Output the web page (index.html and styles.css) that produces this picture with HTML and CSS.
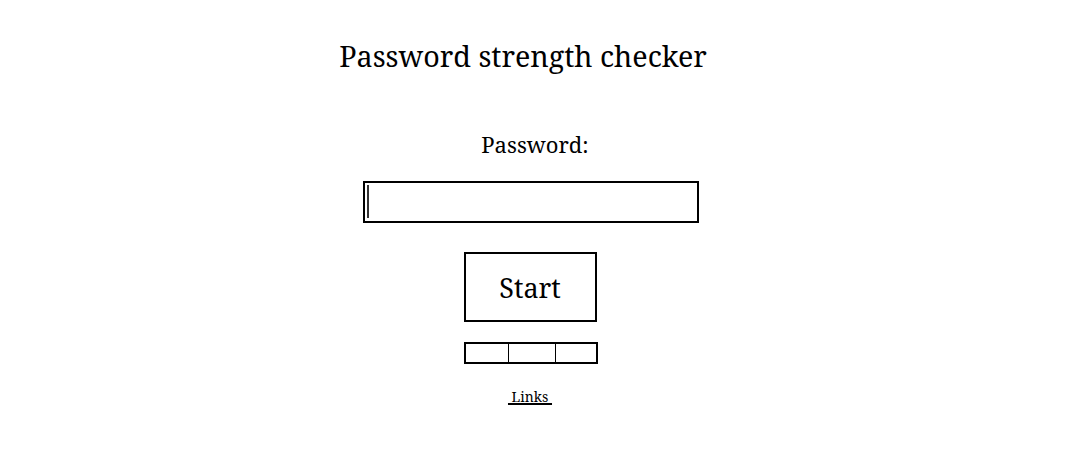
FILE: index.html
```html
<!DOCTYPE html>
<html lang="en">
<head>
    <meta charset="UTF-8">
    <meta name="viewport" content="width=device-width, initial-scale=1.0">
    <title>Password strength checker</title>
    <link rel="stylesheet" href="styles.css">
</head>
<body>
    <div class="page">
        <h1 class="title">Password strength checker</h1>

        <label class="label" for="password">Password:</label>

        <div class="field">
            <input class="input" type="password" id="password">
            <span class="caret"></span>
        </div>

        <button class="start-btn" type="button">Start</button>

        <div class="meter">
            <div class="cell"></div>
            <div class="cell"></div>
            <div class="cell"></div>
        </div>

        <a href="#" class="links">&nbsp;Links&nbsp;</a>
    </div>
</body>
</html>
```

FILE: styles.css
```css
* {
    margin: 0;
    padding: 0;
    box-sizing: border-box;
}

body {
    background: white;
    font-family: "Noto Serif", "DejaVu Serif", serif;
    color: #000;
}

.page {
    width: 1060px;
    display: flex;
    flex-direction: column;
    align-items: center;
}

.title {
    font-size: 28.7px;
    font-weight: normal;
    margin-top: 36px;
    margin-right: 14px;
}

.label {
    font-size: 22px;
    margin-top: 54px;
    margin-left: 10px;
}

.field {
    position: relative;
    margin-top: 22px;
    margin-left: 2px;
}

.input {
    display: block;
    width: 336px;
    height: 42px;
    border: 2px solid #000;
    outline: none;
    font-size: 24px;
    padding: 0 6px;
}

.caret {
    position: absolute;
    left: 4px;
    top: 4px;
    width: 2px;
    height: 33px;
    background: #333;
}

.start-btn {
    margin-top: 29px;
    width: 133px;
    height: 70px;
    border: 2px solid #000;
    background: white;
    font-family: inherit;
    font-size: 27px;
    color: #000;
}

.meter {
    display: grid;
    grid-template-columns: 42px 47px 41px;
    margin-top: 20px;
    margin-left: 2px;
    width: 134px;
    height: 22px;
    border: 2px solid #000;
}

.cell {
    border-left: 1px solid #000;
}

.cell:first-child {
    border-left: none;
}

.links {
    margin-top: 23px;
    font-size: 14px;
    color: #000;
    text-decoration-thickness: 2px;
}
```
